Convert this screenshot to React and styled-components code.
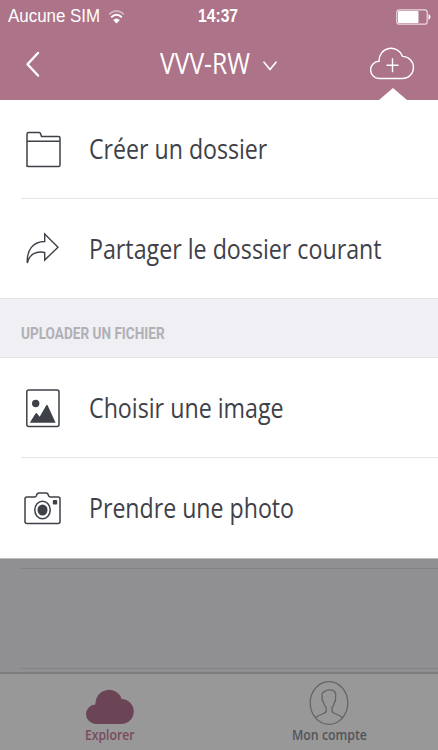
import React from "react";
import styled, { createGlobalStyle } from "styled-components";

const ink = "#3f4149";

const GlobalStyle = createGlobalStyle`
  * { box-sizing: border-box; }
  html, body { margin: 0; padding: 0; }
  body { background: #909092; font-family: "Open Sans", "Noto Sans", sans-serif; }
`;

const Screen = styled.div`
  width: 438px;
  height: 750px;
  overflow: hidden;
  display: flex;
  flex-direction: column;
  background: #909092;
`;

const Header = styled.header`
  height: 100px;
  flex: none;
  background: #ad7388;
  color: #fff;
`;

const StatusBar = styled.div`
  height: 33px;
  display: grid;
  grid-template-columns: 1fr 42px 1fr;
  align-items: center;
  font-family: "Liberation Sans", Arial, sans-serif;
  font-size: 18px;
`;

const Carrier = styled.div`
  display: flex;
  align-items: center;
  gap: 8px;
  padding-left: 8px;
`;

const BatterySlot = styled.div`
  display: flex;
  justify-content: flex-end;
  padding-right: 7px;
`;

const Fit = styled.span`
  display: block;
  width: ${(p) => p.$w}px;
  white-space: nowrap;
  font-weight: ${(p) => p.$weight || 400};
  transform: scaleX(${(p) => p.$x || 1});
  transform-origin: 0 50%;
`;

const NavBar = styled.nav`
  height: 67px;
  display: grid;
  grid-template-columns: 160px 1fr 78px;
`;

const BackSlot = styled.div`
  padding: 18px 0 0 25px;
`;

const Title = styled.div`
  display: flex;
  align-items: flex-start;
  gap: 13px;
  font-size: 29px;
  line-height: 38px;
  padding-top: 11px;

  svg { margin-top: 17px; }
`;

const UploadSlot = styled.div`
  display: flex;
  flex-direction: column;
  align-items: center;
  width: 65px;
  padding-top: 13px;
  gap: 7px;
`;

const Menu = styled.main`
  flex: none;
  height: 459px;
  background: #fff;
  border-bottom: 1px solid #bdbdc0;
`;

const Row = styled.div`
  height: ${(p) => p.$h || 100}px;
  display: grid;
  grid-template-columns: 68px 1fr;
  align-items: center;
  margin-left: 21px;
  border-bottom: ${(p) => (p.$line ? "1px solid #e5e5e7" : "0")};
  color: ${ink};
  font-size: 27px;
  line-height: 36px;

  svg { display: block; }
`;

const Section = styled.div`
  height: 60px;
  background: #efeff4;
  border-top: 1px solid #e4e4e8;
  border-bottom: 1px solid #e4e4e8;
  padding: 10px 0 0 21px;
  display: flex;
  align-items: center;
  color: #b0b0b6;
  font-family: Roboto, sans-serif;
  font-size: 16.5px;
`;

const Backdrop = styled.div`
  flex: 1;
  padding-top: 9px;
`;

const EmptyRow = styled.div`
  height: ${(p) => p.$h}px;
  margin-left: 21px;
  border-top: 1px solid #818183;
`;

const TabBar = styled.footer`
  height: 78px;
  flex: none;
  display: grid;
  grid-template-columns: 1fr 1fr;
  background: #989898;
  border-top: 2px solid #7c7c7e;
`;

const Tab = styled.div`
  display: flex;
  flex-direction: column;
  align-items: center;
  justify-content: flex-end;
  color: ${(p) => p.$color};
  font-size: 14px;
  line-height: 20px;
  padding-bottom: 5px;
`;

const line = { fill: "none", stroke: ink, strokeWidth: 1.5, strokeLinejoin: "round", strokeLinecap: "round" };
const cloud = "M9.600 31A8.600 8.600 0 0 1 9.400 13.800A12.100 12.100 0 0 1 32.900 8.900A11 11 0 0 1 32.500 31Z";

const Wifi = () => (
  <svg width="17" height="14" viewBox="0 0 17 14" fill="none" stroke="#fff">
    <path d="M1 4.500Q8.500-2.500 16 4.500" strokeWidth="1.700" opacity=".45" />
    <path d="M3.200 7.300Q8.500 2.300 13.800 7.300" strokeWidth="1.900" />
    <path d="M5.200 10Q8.500 7 11.800 10L8.500 13.500Z" fill="#fff" stroke="none" />
  </svg>
);

const Battery = () => (
  <svg width="35" height="16" viewBox="0 0 35 16">
    <rect x=".8" y=".8" width="30.400" height="14.400" rx="2.500" fill="none" stroke="#fff" strokeWidth="1.200" opacity=".75" />
    <rect x="2" y="2" width="20.500" height="12" rx="1" fill="#fff" />
    <path d="M32.500 5.300Q34.500 6 34.500 8T32.500 10.700Z" fill="#fff" />
  </svg>
);

const Folder = () => (
  <svg width="46" height="40" viewBox="0 0 46 40" {...line}>
    <path d="M6 37.500V5Q6 3.500 7.500 3.500H18Q19 3.500 19.500 4.500L20.500 7.500H37.500Q39 7.500 39 9V36Q39 37.500 37.500 37.500H7.500Q6 37.500 6 36M6 12.300H39" />
  </svg>
);

const Share = () => (
  <svg width="46" height="40" viewBox="0 0 46 40" {...line} strokeLinejoin="miter" strokeWidth="1.400">
    <path d="M23.700 5L37 18.300L23.700 31V23.500C15.500 21.500 8.500 25 6.300 34C5.500 21 12 12.500 23.700 12.500Z" />
  </svg>
);

const Picture = () => (
  <svg width="46" height="40" viewBox="0 0 46 40">
    <rect x="5.800" y="2" width="32.200" height="36.500" rx="2" {...line} />
    <circle cx="14.700" cy="15.500" r="3.700" fill={ink} />
    <path d="M8.800 34.800L14.500 25.500Q15.300 24.500 16 25.500L18.700 28.700L25.300 17.300Q26 16.300 26.700 17.500L34.600 34.800Z" fill={ink} />
  </svg>
);

const Camera = () => (
  <svg width="46" height="40" viewBox="0 0 46 40">
    <path d="M4 33.500V11Q4 9 6 9H13.500Q15 9 15.500 7.500Q16 5 18 5H25Q27 5 27.500 7.500Q28 9 29.500 9H37Q39 9 39 11V33.500Q39 35.500 37 35.500H6Q4 35.500 4 33.500Z" {...line} />
    <ellipse cx="21.500" cy="22" rx="7.700" ry="8.700" {...line} />
    <ellipse cx="21.500" cy="22" rx="5" ry="5.600" fill={ink} />
    <rect x="31.800" y="12" width="4.400" height="4.600" rx="1" fill={ink} />
  </svg>
);

const Person = () => (
  <svg width="40" height="44" viewBox="0 0 40 44" fill="none" stroke="#656567" strokeWidth="1.300" strokeLinejoin="round">
    <ellipse cx="20" cy="22" rx="18.800" ry="21.300" />
    <path d="M6.500 36.500Q9 34.500 14.500 32.500Q17.200 31.500 17.200 29.500V26.500Q15 24.500 14.500 20.800Q12.800 20 13.200 16.500Q12 11 16 10.500Q17 8.800 21 8.800Q25 8.800 26.200 11.500Q27.300 13 26.500 17Q27 20.500 25.500 20.800Q25 24.500 23 26.500V29.500Q23 31.500 25.700 32.500Q31 34.500 33.500 36.500" />
  </svg>
);

export default function App() {
  return (
    <Screen>
      <GlobalStyle />
      <Header>
        <StatusBar>
          <Carrier>
            <Fit $w={92} $x={0.94}>Aucune SIM</Fit>
            <Wifi />
          </Carrier>
          <Fit $w={42} $x={0.87} $weight={700}>14:37</Fit>
          <BatterySlot><Battery /></BatterySlot>
        </StatusBar>
        <NavBar>
          <BackSlot>
            <svg width="16" height="27" viewBox="0 0 16 27" fill="none" stroke="#fff" strokeWidth="2.400" strokeLinecap="round" strokeLinejoin="round">
              <path d="M13 2L2.500 13.300L13 24.500" />
            </svg>
          </BackSlot>
          <Title>
            <Fit $w={90} $x={0.85}>VVV-RW</Fit>
            <svg width="14" height="10" viewBox="0 0 14 10" fill="none" stroke="#fff" strokeWidth="1.600" strokeLinecap="round">
              <path d="M1 1.200L7 8.500L13 1.200" />
            </svg>
          </Title>
          <UploadSlot>
            <svg width="45" height="34" viewBox="0 0 45 34" fill="none" stroke="#fff" strokeWidth="1.400">
              <path d={cloud} transform="translate(-.300 1.500)" />
              <path d="M16.500 19.300H28.500M22.500 12.300V26.300" />
            </svg>
            <svg width="28" height="13" viewBox="0 0 28 13"><path d="M0 13L14 1L28 13Z" fill="#fff" /></svg>
          </UploadSlot>
        </NavBar>
      </Header>
      <Menu>
        <Row $h={99} $line><Folder /><Fit $w={178} $x={0.857}>Créer un dossier</Fit></Row>
        <Row $h={99}><Share /><Fit $w={292} $x={0.86}>Partager le dossier courant</Fit></Row>
        <Section><Fit $w={144} $x={0.823} $weight={700}>UPLOADER UN FICHIER</Fit></Section>
        <Row $line><Picture /><Fit $w={195} $x={0.86}>Choisir une image</Fit></Row>
        <Row><Camera /><Fit $w={204} $x={0.857}>Prendre une photo</Fit></Row>
      </Menu>
      <Backdrop>
        <EmptyRow $h={100} />
        <EmptyRow $h={4} />
      </Backdrop>
      <TabBar>
        <Tab $color="#7a4b5e">
          <svg width="49" height="36" viewBox="0 0 44 32" preserveAspectRatio="none"><path d={cloud} fill="#6b4556" /></svg>
          <Fit $w={49} $x={0.87} $weight={600}>Explorer</Fit>
        </Tab>
        <Tab $color="#535458">
          <Person />
          <Fit $w={74} $x={0.88} $weight={600}>Mon compte</Fit>
        </Tab>
      </TabBar>
    </Screen>
  );
}
